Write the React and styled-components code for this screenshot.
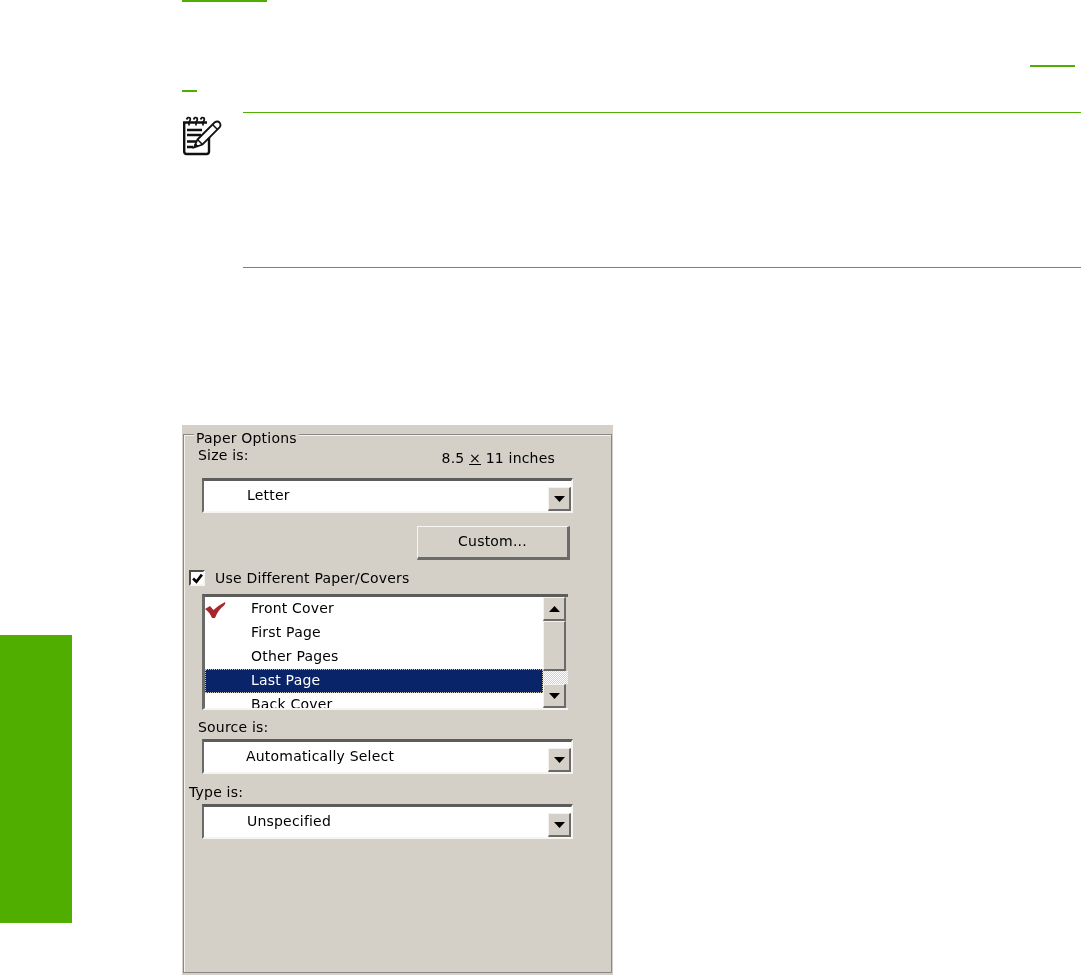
import React from "react";
import styled, { createGlobalStyle } from "styled-components";

const green = "#4fae00";
const face = "#d4d0c8";

const GlobalStyle = createGlobalStyle`
  html, body {
    margin: 0;
    background: #fff;
  }
`;

const Page = styled.div`
  display: flex;
  width: 1081px;
  height: 977px;
  overflow: hidden;
  background: #fff;
`;

const SideColumn = styled.div`
  width: 72px;
  padding-top: 635px;
  flex-shrink: 0;
`;

const ChapterTab = styled.div`
  height: 288px;
  background: ${green};
`;

const Main = styled.div`
  flex: 1;
  padding-left: 110px;
`;

const LinkLine = styled.div`
  height: 2px;
  width: ${(p) => p.$width}px;
  margin-top: ${(p) => p.$top || 0}px;
  margin-left: ${(p) => p.$left || 0}px;
  background: ${green};
`;

const Note = styled.div`
  display: flex;
  margin-top: 20px;
`;

const NoteIcon = styled.div`
  width: 61px;
  padding-top: 4px;
  flex-shrink: 0;
`;

const NoteBody = styled.div`
  flex: 1;
  height: 154px;
  border-top: 1px solid ${green};
  border-bottom: 1px solid ${green};
`;

const Dialog = styled.div`
  width: 431px;
  height: 550px;
  margin-top: 157px;
  padding: 9px 1px 2px;
  box-sizing: border-box;
  background: ${face};
  font-family: "DejaVu Sans", Verdana, sans-serif;
  font-size: 14px;
  letter-spacing: 0.2px;
  color: #000;
  filter: blur(0.4px);
`;

const Frame = styled.div`
  position: relative;
  height: 100%;
  box-sizing: border-box;
  border: 1px solid #8a8884;
  box-shadow: inset 1px 1px 0 #f4f2ee;
`;

const Legend = styled.div`
  position: absolute;
  top: -6px;
  left: 10px;
  padding: 0 2px;
  line-height: 18px;
  background: ${face};
`;

const SizeRow = styled.div`
  display: flex;
  justify-content: space-between;
  align-items: flex-start;
  height: 20px;
  margin: 10px 56px 0 14px;
`;

const SizeLabel = styled.span`
  line-height: 20px;
`;

const Label = styled.div`
  height: 20px;
  line-height: 20px;
  margin-top: ${(p) => p.$top}px;
  margin-left: ${(p) => p.$left}px;
`;

const PaperSize = styled.div`
  line-height: 20px;
  margin-top: 3px;
`;

const Times = styled.span`
  text-decoration: underline;
`;

const Select = styled.div`
  display: flex;
  align-items: stretch;
  width: 371px;
  height: 35px;
  margin-top: ${(p) => p.$top}px;
  margin-left: 18px;
  box-sizing: border-box;
  border-style: solid;
  border-width: 3px 2px 2px 2px;
  border-color: #5c5c5a #f6f5f2 #f6f5f2 #6a6a68;
  background: #fff;
`;

const SelectText = styled.div`
  flex: 1;
  padding-left: ${(p) => p.$inset}px;
  line-height: 28px;
`;

const ScrollButton = styled.div`
  display: flex;
  align-items: center;
  justify-content: center;
  box-sizing: border-box;
  flex-shrink: 0;
  width: 23px;
  height: 24px;
  align-self: ${(p) => (p.$end ? "flex-end" : "auto")};
  background: ${face};
  border-style: solid;
  border-width: 1px 2px 2px 1px;
  border-color: #f4f2ee #6a6a68 #6a6a68 #f4f2ee;
`;

const ButtonRow = styled.div`
  display: flex;
  margin-top: 13px;
  margin-left: 233px;
`;

const PushButton = styled.div`
  width: 153px;
  height: 34px;
  box-sizing: border-box;
  border-style: solid;
  border-width: 1px 3px 3px 1px;
  border-color: #f8f7f4 #6a6a68 #6a6a68 #f8f7f4;
  text-align: center;
  line-height: 29px;
`;

const CheckRow = styled.div`
  display: flex;
  align-items: center;
  gap: 10px;
  height: 16px;
  margin-top: 10px;
  margin-left: 5px;
`;

const CheckBox = styled.div`
  display: flex;
  align-items: center;
  justify-content: center;
  width: 16px;
  height: 16px;
  box-sizing: border-box;
  border-style: solid;
  border-width: 2px;
  border-color: #4a4a48 #f6f5f2 #f6f5f2 #4a4a48;
  background: #fff;
`;

const ListBox = styled.div`
  display: flex;
  width: 366px;
  height: 116px;
  margin-top: 8px;
  margin-left: 18px;
  box-sizing: border-box;
  border-style: solid;
  border-width: 3px 0 2px 3px;
  border-color: #5c5c5a #f6f5f2 #f6f5f2 #6a6a68;
  background: #fff;
  overflow: hidden;
`;

const ListRows = styled.div`
  flex: 1;
  height: 111px;
  overflow: hidden;
`;

const ListRow = styled.div`
  position: relative;
  height: 24px;
  box-sizing: border-box;
  padding-left: 46px;
  line-height: 22px;
  color: ${(p) => (p.$selected ? "#fff" : "inherit")};
  background: ${(p) => (p.$selected ? "#0a246a" : "transparent")};
  outline: ${(p) => (p.$selected ? "1px dotted #c8c4b8" : "none")};
  outline-offset: -1px;
`;

const CheckMark = styled.svg`
  position: absolute;
  left: 0;
  top: 5px;
`;

const ScrollBar = styled.div`
  display: flex;
  flex-direction: column;
  width: 25px;
  flex-shrink: 0;
  background: ${face};
`;

const Thumb = styled.div`
  height: 50px;
  box-sizing: border-box;
  width: 23px;
  border-style: solid;
  border-width: 1px 2px 2px 1px;
  border-color: #f4f2ee #6a6a68 #6a6a68 #f4f2ee;
`;

const Track = styled.div`
  height: 13px;
  background: repeating-conic-gradient(#d4d0c8 0 25%, #fff 0 50%) 0 0 / 2px 2px;
`;

const Arrow = ({ up }) => (
  <svg width="11" height="6" viewBox="0 0 11 6">
    <path d={up ? "M5.5 0 L11 6 H0 Z" : "M0 0 H11 L5.5 6 Z"} fill="#000" />
  </svg>
);

const NotepadIcon = () => (
  <svg width="40" height="40" viewBox="0 0 40 40" fill="none" stroke="#111">
    <path d="M25 6.5 H2.2 V35.5 Q2.2 38 4.7 38 H24.5 Q27 38 27 35.5 V20" strokeWidth="2.4" />
    <path d="M4.5 3.5 Q6 0.5 8 2 Q9 4 7 6 V9.5 M11.5 3.5 Q13 0.5 15 2 Q16 4 14 6 V9.5 M18.5 3.5 Q20 0.5 22 2 Q23 4 21 6 V9.5" strokeWidth="1.7" />
    <path d="M5 14 H20 M5 19 H19 M5 25.5 H14 M5 31 H11" strokeWidth="2.6" />
    <path d="M15.5 23.5 L32.5 6.5 Q35.5 4.5 37.5 6.5 Q39.5 9 37.5 11.5 L20.5 28.5 L12 31.5 Z" fill="#fff" strokeWidth="1.8" />
    <path d="M15.5 23.5 L20.5 28.5 M30.5 8.5 L35.5 13.5" strokeWidth="1.5" />
    <path d="M12 31.5 L13.5 27.5 L16 30 Z" fill="#111" strokeWidth="0.8" />
  </svg>
);

const rows = ["Front Cover", "First Page", "Other Pages", "Last Page", "Back Cover"];

const DropDown = ({ top, inset, children }) => (
  <Select $top={top}>
    <SelectText $inset={inset}>{children}</SelectText>
    <ScrollButton $end>
      <Arrow />
    </ScrollButton>
  </Select>
);

const App = () => {
  return (
    <>
      <GlobalStyle />
      <Page>
        <SideColumn>
          <ChapterTab />
        </SideColumn>
        <Main>
          <LinkLine $width={85} />
          <LinkLine $width={45} $top={63} $left={848} />
          <LinkLine $width={15} $top={23} />
          <Note>
            <NoteIcon>
              <NotepadIcon />
            </NoteIcon>
            <NoteBody />
          </Note>
          <Dialog>
            <Frame>
              <Legend>Paper Options</Legend>
              <SizeRow>
                <SizeLabel>Size is:</SizeLabel>
                <PaperSize>
                  8.5 <Times>×</Times> 11 inches
                </PaperSize>
              </SizeRow>
              <DropDown top={13} inset={43}>Letter</DropDown>
              <ButtonRow>
                <PushButton>Custom...</PushButton>
              </ButtonRow>
              <CheckRow>
                <CheckBox>
                  <svg width="11" height="11" viewBox="0 0 10 10">
                    <path d="M1 5 L4 8 L9 1.5" fill="none" stroke="#000" strokeWidth="2.4" />
                  </svg>
                </CheckBox>
                Use Different Paper/Covers
              </CheckRow>
              <ListBox>
                <ListRows>
                  {rows.map((row, i) => (
                    <ListRow key={row} $selected={i === 3}>
                      {i === 0 && (
                        <CheckMark width="21" height="17" viewBox="0 0 21 17">
                          <path d="M0 7 L5 4 L8.5 8 Q14 3 20 0 Q21 1.5 19 3.5 Q13 8 10 16 L7 16 Q4.5 10 0 7 Z" fill="#a8262c" />
                        </CheckMark>
                      )}
                      {row}
                    </ListRow>
                  ))}
                </ListRows>
                <ScrollBar>
                  <ScrollButton>
                    <Arrow up />
                  </ScrollButton>
                  <Thumb />
                  <Track />
                  <ScrollButton>
                    <Arrow />
                  </ScrollButton>
                </ScrollBar>
              </ListBox>
              <Label $top={7} $left={14}>Source is:</Label>
              <DropDown top={2} inset={42}>Automatically Select</DropDown>
              <Label $top={8} $left={5}>Type is:</Label>
              <DropDown top={2} inset={43}>Unspecified</DropDown>
            </Frame>
          </Dialog>
        </Main>
      </Page>
    </>
  );
};

export default App;
